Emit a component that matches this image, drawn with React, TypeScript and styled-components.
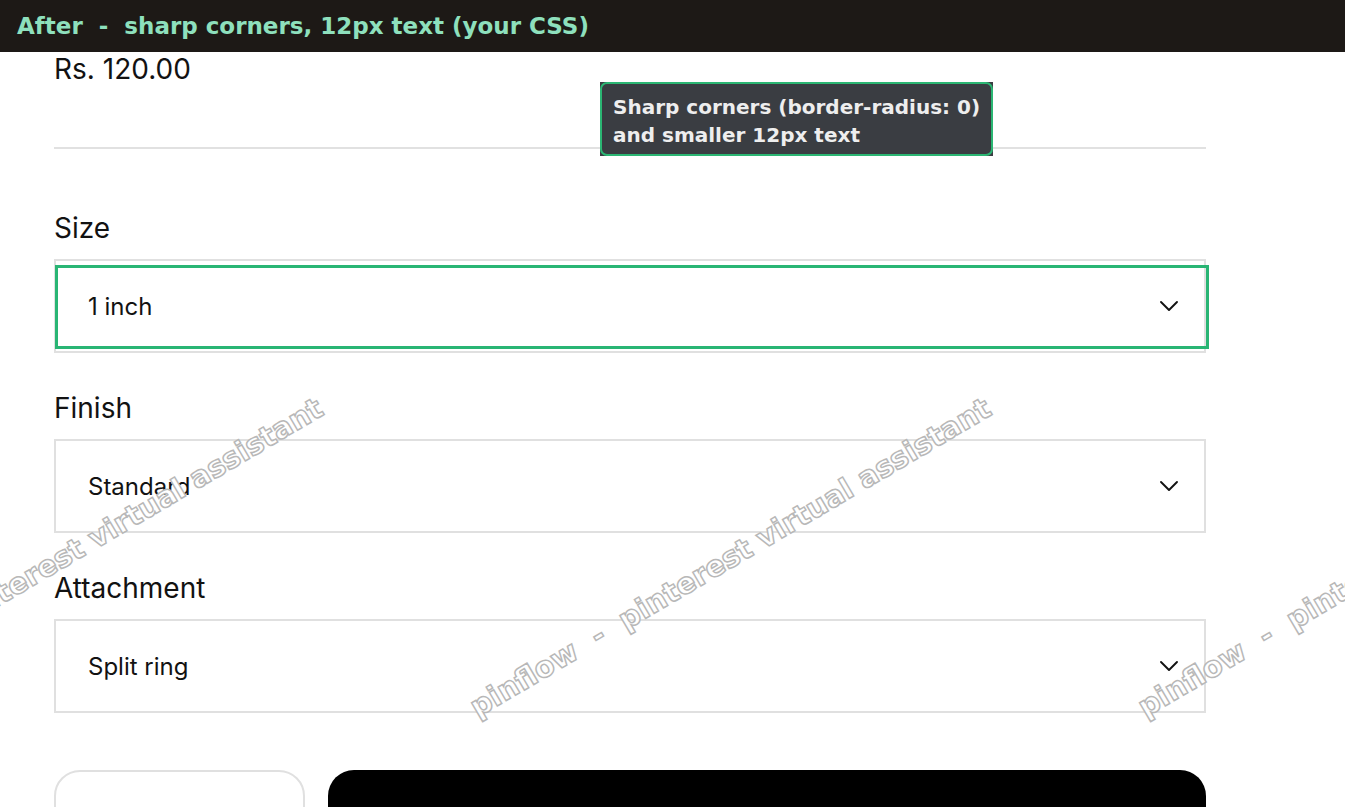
import React from 'react'
import styled, { createGlobalStyle } from 'styled-components'

const GlobalStyle = createGlobalStyle`
  html, body {
    margin: 0;
    padding: 0;
    background: #ffffff;
    overflow: hidden;
  }
  body {
    font-family: Inter, "Liberation Sans", sans-serif;
    color: #111111;
  }
`

const Screen = styled.div`
  position: relative;
  width: 1345px;
  height: 807px;
  overflow: hidden;
  background: #ffffff;
`

const TopBar = styled.header`
  display: flex;
  align-items: center;
  height: 52px;
  padding: 0 17px;
  background: #1d1916;
  color: #8ee0bd;
  font-family: "DejaVu Sans", sans-serif;
  font-weight: 700;
  font-size: 23px;
  white-space: pre;
`

const Product = styled.main`
  position: relative;
  display: flex;
  flex-direction: column;
  width: 1152px;
  margin-left: 54px;
`

const Price = styled.div`
  margin-top: 2px;
  font-size: 28px;
  line-height: 30px;
  color: #121212;
`

const Divider = styled.hr`
  margin: 63px 0 0;
  border: none;
  border-top: 2px solid #e1e1e1;
`

const Fields = styled.div`
  display: flex;
  flex-direction: column;
  gap: 40px;
  margin-top: 64px;
`

const Field = styled.div`
  display: flex;
  flex-direction: column;
  gap: 16px;
`

const Label = styled.label`
  font-size: 28px;
  line-height: 30px;
  color: #121212;
`

const Select = styled.div`
  position: relative;
  display: flex;
  align-items: center;
  justify-content: space-between;
  height: 94px;
  box-sizing: border-box;
  padding: 0 23px 0 32px;
  border: 2px solid #e0e0e0;
  font-size: 24px;
  color: #121212;
`

const Highlight = styled.span`
  position: absolute;
  top: 4px;
  left: -1px;
  right: -5px;
  bottom: 2px;
  border: 3px solid #29b574;
  pointer-events: none;
`

const Chevron = styled.svg`
  width: 24px;
  height: 24px;
  fill: none;
  stroke: #121212;
  stroke-width: 1.9;
  stroke-linecap: round;
  stroke-linejoin: round;
`

const Actions = styled.div`
  display: flex;
  gap: 23px;
  margin-top: 57px;
`

const Quantity = styled.div`
  width: 251px;
  height: 70px;
  box-sizing: border-box;
  border: 2px solid #e0e0e0;
  border-radius: 26px;
`

const CartButton = styled.button`
  flex: 1;
  display: flex;
  align-items: flex-start;
  height: 70px;
  border: none;
  border-radius: 26px;
  background: #000000;
  color: #ffffff;
  font-family: Inter, "Liberation Sans", sans-serif;
  font-size: 26px;
  font-weight: 600;
  padding: 34px 0 0 352px;
`

const Tip = styled.div`
  position: absolute;
  top: 30px;
  left: 546px;
  width: 393px;
  height: 74px;
  background: #3a3d42;
`

const TipInner = styled.div`
  box-sizing: border-box;
  height: 100%;
  padding: 9px 11px;
  border: 2px solid #2bb673;
  border-radius: 7px;
  color: #eeeeee;
  font-family: "DejaVu Sans", sans-serif;
  font-weight: 700;
  font-size: 20px;
  line-height: 28px;
  white-space: nowrap;
`

const Watermarks = styled.div`
  position: absolute;
  inset: 0;
  pointer-events: none;
`

const Mark = styled.div<{ $x: number; $y: number }>`
  position: absolute;
  left: ${(p) => p.$x}px;
  top: ${(p) => p.$y}px;
  transform-origin: 0 100%;
  transform: rotate(-30.5deg);
  font-family: "DejaVu Sans", sans-serif;
  font-weight: 700;
  font-size: 29px;
  line-height: 30px;
  white-space: pre;
  color: #ffffff;
  -webkit-text-stroke: 1.5px #b8b8b8;
`

const ChevronIcon = () => (
  <Chevron viewBox="0 0 24 24">
    <path d="m4 8 8 8 8-8" />
  </Chevron>
)

const fields = [
  { label: 'Size', value: '1 inch', active: true },
  { label: 'Finish', value: 'Standard', active: false },
  { label: 'Attachment', value: 'Split ring', active: false },
]

const marks = [-188, 480, 1148]

export default function App() {
  return (
    <Screen>
      <GlobalStyle />
      <TopBar>After  -  sharp corners, 12px text (your CSS)</TopBar>
      <Product>
        <Price>Rs. 120.00</Price>
        <Divider />
        <Fields>
          {fields.map((f) => (
            <Field key={f.label}>
              <Label>{f.label}</Label>
              <Select>
                {f.value}
                <ChevronIcon />
                {f.active && <Highlight />}
              </Select>
            </Field>
          ))}
        </Fields>
        <Actions>
          <Quantity />
          <CartButton>Add to cart</CartButton>
        </Actions>
        <Tip>
          <TipInner>
            Sharp corners (border-radius: 0)
            <br />
            and smaller 12px text
          </TipInner>
        </Tip>
      </Product>
      <Watermarks>
        {marks.map((x) => (
          <Mark key={x} $x={x} $y={692}>
            pinflow  -  pinterest virtual assistant
          </Mark>
        ))}
      </Watermarks>
    </Screen>
  )
}
